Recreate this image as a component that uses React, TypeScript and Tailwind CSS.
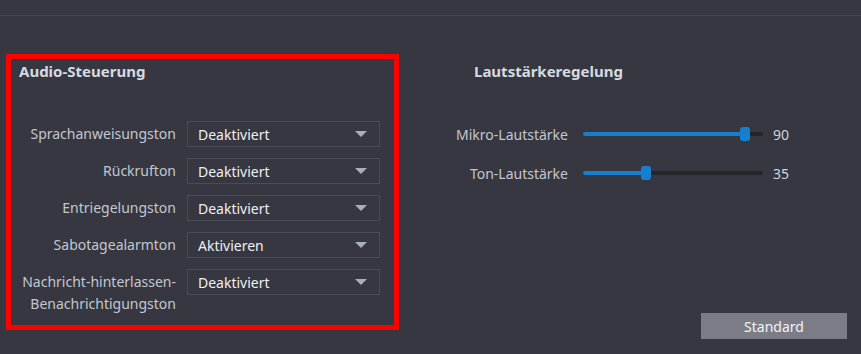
import React from 'react';

interface AudioRow {
  label: string[];
  value: string;
}

interface VolumeRow {
  label: string;
  value: number;
}

const audioRows: AudioRow[] = [
  { label: ['Sprachanweisungston'], value: 'Deaktiviert' },
  { label: ['Rückrufton'], value: 'Deaktiviert' },
  { label: ['Entriegelungston'], value: 'Deaktiviert' },
  { label: ['Sabotagealarmton'], value: 'Aktivieren' },
  { label: ['Nachricht-hinterlassen-', 'Benachrichtigungston'], value: 'Deaktiviert' },
];

const volumeRows: VolumeRow[] = [
  { label: 'Mikro-Lautstärke', value: 90 },
  { label: 'Ton-Lautstärke', value: 35 },
];

const TRACK = 180;

const Select: React.FC<{ value: string }> = ({ value }) => (
  <div className="w-[193px] h-[26px] border border-[#4a4c57] flex items-center justify-between pl-[10px] pr-[12px] text-[14px] text-[#eef0f4]">
    <span>{value}</span>
    <svg width="12" height="6" viewBox="0 0 12 6">
      <path d="M0 0 L12 0 L6 6 Z" fill="#a9aebb" />
    </svg>
  </div>
);

const Slider: React.FC<{ value: number }> = ({ value }) => {
  const pos = (value / 100) * TRACK;
  return (
    <div className="relative w-[180px] h-[14px] flex items-center">
      <div className="w-full h-[4px] rounded-full bg-[#24252b]">
        <div className="h-full rounded-full bg-[#1580d0]" style={{ width: pos }} />
      </div>
      <div
        className="absolute top-0 w-[10px] h-[14px] rounded-[3px] bg-[#1580d0]"
        style={{ left: pos - 5 }}
      />
    </div>
  );
};

const App: React.FC = () => {
  return (
    <div className="w-[861px] h-[354px] bg-[#363740] flex flex-col overflow-hidden font-['Noto_Sans',sans-serif]">
      <div className="h-[16px] shrink-0 border-b border-[#45464f]" />
      <div className="flex flex-1 pt-[38px] pl-[6px]">
        {/* Audio-Steuerung */}
        <div className="w-[393px] h-[276px] shrink-0 border-[5px] border-[#ff0000] pt-[2px]">
          <div className="h-[20px] leading-[20px] pl-[8px] text-[15px] font-bold text-[#d6dae2]">
            Audio-Steuerung
          </div>
          <div className="mt-[40px] flex flex-col gap-[11px] pl-[5px]">
            {audioRows.map((r, i) => (
              <div key={i} className="flex items-start gap-[11px]">
                <div className="w-[160px] pt-[2px] text-right text-[14px] leading-[22px] text-[#c3c7d0]">
                  {r.label.map((l, j) => (
                    <div key={j}>{l}</div>
                  ))}
                </div>
                <Select value={r.value} />
              </div>
            ))}
          </div>
        </div>

        {/* Lautstärkeregelung */}
        <div className="flex-1 flex flex-col ml-[51px] pt-[7px]">
          <div className="h-[20px] leading-[20px] pl-[24px] text-[15px] font-bold text-[#d6dae2]">
            Lautstärkeregelung
          </div>
          <div className="mt-[43px] flex flex-col gap-[19px]">
            {volumeRows.map(v => (
              <div key={v.label} className="h-[20px] flex items-center">
                <div className="w-[118px] text-right text-[14px] text-[#c3c7d0]">{v.label}</div>
                <div className="ml-[15px]">
                  <Slider value={v.value} />
                </div>
                <div className="ml-[10px] text-[14px] text-[#d0d4dc]">{v.value}</div>
              </div>
            ))}
          </div>
          <button className="mt-auto mb-[15px] mr-[14px] self-end w-[146px] h-[26px] bg-[#7b7c86] text-[14px] text-[#f2f4f8]">
            Standard
          </button>
        </div>
      </div>
    </div>
  );
};

export default App;
